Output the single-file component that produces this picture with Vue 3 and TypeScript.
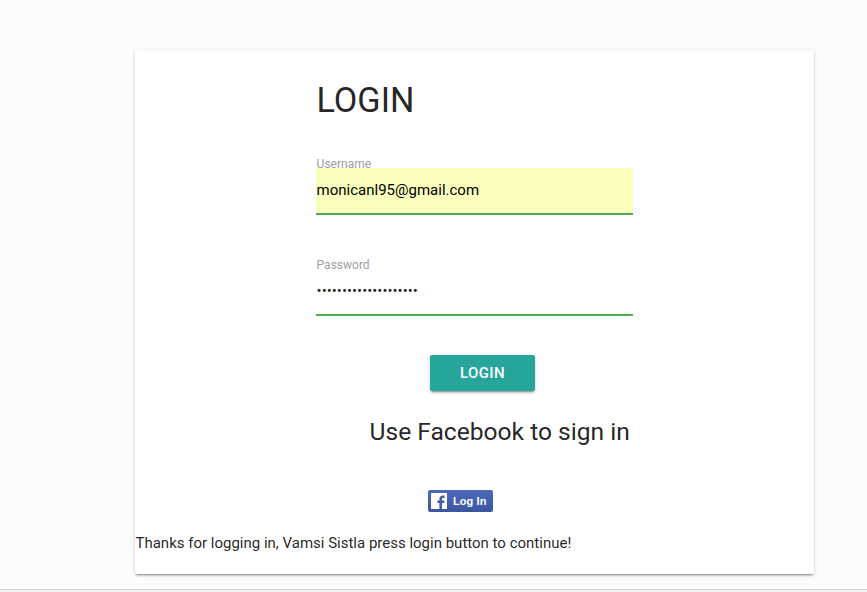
<script setup lang="ts">
import { ref } from 'vue'

const username = ref<string>('monicanl95@gmail.com')
const password = ref<string>('••••••••••••••••••••')
const displayName = 'Vamsi Sistla'
</script>

<template>
  <main class="page">
    <section class="card">
      <form class="form" @submit.prevent>
        <h4 class="title">LOGIN</h4>
        <div class="field">
          <label class="label" for="username">Username</label>
          <input id="username" v-model="username" class="input filled" type="text" spellcheck="false" />
        </div>
        <div class="field">
          <label class="label" for="password">Password</label>
          <input id="password" v-model="password" class="input secret" type="text" />
        </div>
        <button class="submit" type="submit">LOGIN</button>
        <h5 class="subtitle">Use Facebook to sign in</h5>
        <button class="facebook" type="button">
          <svg class="logo" viewBox="0 0 16 16" aria-hidden="true">
            <rect width="16" height="16" rx="0.6" fill="#fff" />
            <path d="M8.4 16V10H6.4V7.5h2V6c0-2.3 1.3-3.5 3.4-3.5.8 0 1.5.1 1.8.1v2.3h-1.2c-1 0-1.4.5-1.4 1.2v1.4h2.5l-.3 2.5H11V16z" fill="#435ca6" />
          </svg>
          <span>Log In</span>
        </button>
      </form>
      <p class="status">Thanks for logging in, {{ displayName }} press login button to continue!</p>
    </section>
    <footer class="footer"></footer>
  </main>
</template>

<style>
body {
  background: #fcfcfc;
}
</style>

<style scoped>
.page {
  box-sizing: border-box;
  display: flex;
  flex-direction: column;
  height: 592px;
  padding-top: 50px;
  overflow: hidden;
  font-family: Roboto, sans-serif;
  font-size: 15px;
  line-height: 22.5px;
  color: rgba(0, 0, 0, 0.87);
}

.card {
  width: 679px;
  height: 524px;
  flex: none;
  margin-left: 135px;
  background: #fff;
  border-radius: 2px;
  box-shadow: 0 2px 2px 0 rgba(0, 0, 0, 0.14), 0 1px 5px 0 rgba(0, 0, 0, 0.12), 0 3px 1px -2px rgba(0, 0, 0, 0.2);
}

.form {
  display: flex;
  flex-direction: column;
  align-items: flex-start;
  width: 317px;
  margin-left: 181px;
  padding-top: 31px;
}

.title {
  margin: 0 0 26px 0.5px;
  font-size: 34.2px;
  line-height: 38px;
  font-weight: 400;
}

.field {
  display: flex;
  flex-direction: column;
  width: 100%;
  height: 101px;
}

.label {
  height: 23px;
  flex: none;
  padding-left: 0.6px;
  font-size: 12px;
  line-height: 39px;
  color: #9e9e9e;
}

.input {
  box-sizing: border-box;
  position: relative;
  width: 100%;
  height: 47px;
  padding: 0 0 2px 0.6px;
  border: 0;
  border-bottom: 2px solid #4caf50;
  border-radius: 0;
  outline: 0;
  background: transparent;
  font: 15px Roboto, sans-serif;
  color: #000;
}

.filled {
  background: #faffbd;
}

.secret {
  color: rgba(0, 0, 0, 0.87);
}

.submit {
  width: 105px;
  height: 36px;
  margin: 8px 0 0 114px;
  padding: 0;
  border: 0;
  border-radius: 2px;
  background: #26a69a;
  box-shadow: 0 2px 2px 0 rgba(0, 0, 0, 0.14), 0 1px 5px 0 rgba(0, 0, 0, 0.12), 0 3px 1px -2px rgba(0, 0, 0, 0.2);
  color: #fff;
  font: 500 15px/36px Roboto, sans-serif;
  letter-spacing: 0.4px;
}

.subtitle {
  margin: 27px 0 45px 53.5px;
  font-size: 24.6px;
  line-height: 27px;
  font-weight: 400;
  white-space: nowrap;
}

.facebook {
  display: flex;
  align-items: center;
  gap: 6px;
  width: 65px;
  height: 22px;
  margin-left: 112px;
  padding: 0 0 0 3px;
  border: 0;
  border-radius: 2px;
  background: linear-gradient(#4c69ba, #3b55a0);
  color: #fff;
  font: bold 11px/22px 'Liberation Sans', Arial, sans-serif;
  letter-spacing: 0.08px;
  white-space: nowrap;
}

.logo {
  width: 16px;
  height: 16px;
  flex: none;
}

.status {
  margin: 20px 0 0 0.5px;
}

.footer {
  flex: none;
  height: 3px;
  margin-top: 15px;
  border-top: 1px solid #d3d3d3;
  background: #f2f2f2;
}
</style>
